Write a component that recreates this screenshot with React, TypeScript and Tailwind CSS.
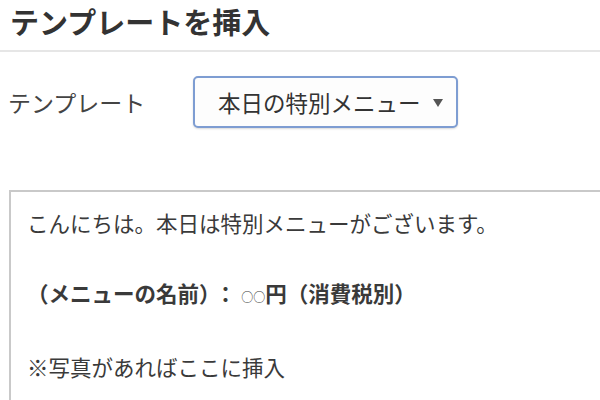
const App = () => {
  return (
    <div className="w-[600px] h-[400px] overflow-hidden bg-white text-[#333] font-['Noto_Sans_CJK_JP','Noto_Sans',sans-serif]">
      {/* Header */}
      <div className="h-[52px] border-b-2 border-[#e6e6e6] pl-[10px]">
        <h1 className="text-[29px] font-bold leading-[42px]">テンプレートを挿入</h1>
      </div>

      {/* Template picker */}
      <div className="flex items-center pl-[8px] pt-[24px]">
        <label className="w-[185px] text-[23px] leading-[30px] text-[#444]">テンプレート</label>
        <div className="flex h-[52px] w-[265px] items-center justify-between rounded-[5px] border-2 border-[#7e9dd2] bg-[#fdfdfd] pl-[23px] pr-[13px] shadow-[0_1px_2px_rgba(0,0,0,0.15)]">
          <span className="text-[22.5px] leading-[30px] text-[#333]">本日の特別メニュー</span>
          <svg width="10" height="8" viewBox="0 0 10 8" className="mt-[2px]">
            <path d="M0 0 H10 L5 8 Z" fill="#555" />
          </svg>
        </div>
      </div>

      {/* Message body */}
      <div className="ml-[9px] mt-[62px] h-[260px] w-[620px] border-2 border-[#c9c9c9] pl-[16px] pt-[13px] text-[21.5px] leading-[35px] text-[#3a3a3a]">
        <p>こんにちは。本日は特別メニューがございます。</p>
        <p>&nbsp;</p>
        <p className="font-bold">
          （メニューの名前）<span className="px-[5px]">：</span><span className="text-[12px] font-normal">○○</span>円（消費税別）
        </p>
        <p>&nbsp;</p>
        <p>※写真があればここに挿入</p>
      </div>
    </div>
  );
};

export default App;
